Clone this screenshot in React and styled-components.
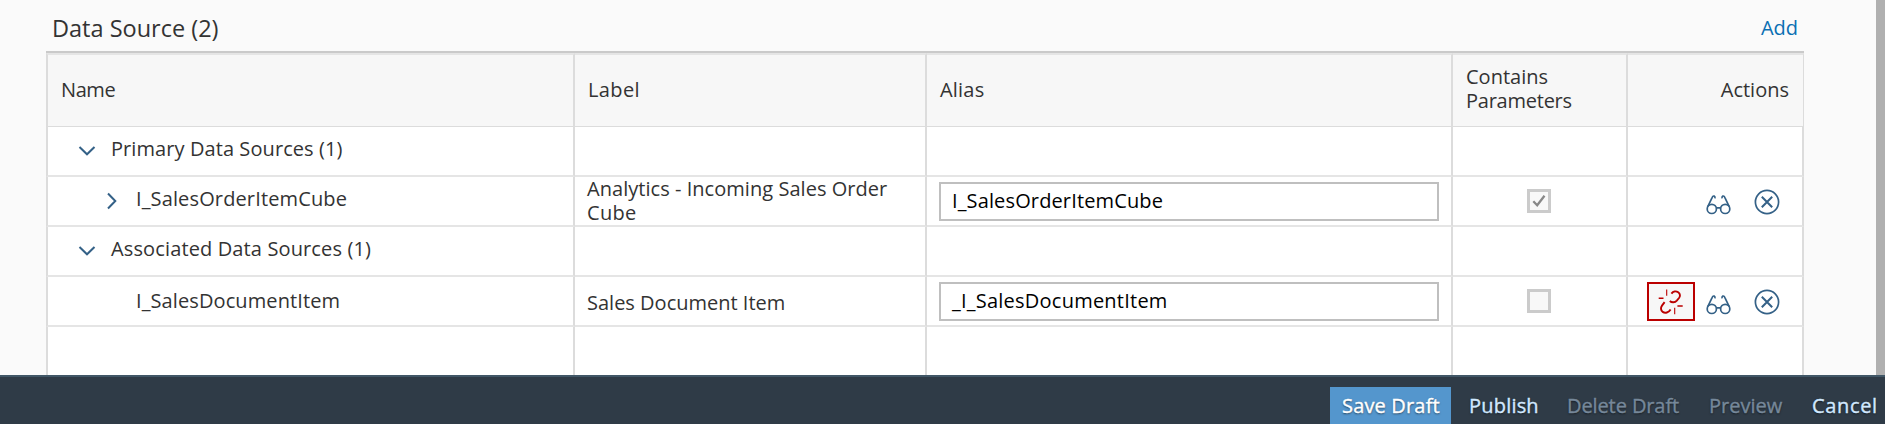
import React from 'react';
import styled, { createGlobalStyle } from 'styled-components';

const GlobalStyle = createGlobalStyle`
  * { box-sizing: border-box; }
  body {
    margin: 0;
    overflow: hidden;
    background: #fafafa;
    color: #333;
    font: 20px/24px "Open Sans", "Noto Sans", sans-serif;
  }
`;

const Page = styled.div`
  display: flex;
  flex-direction: column;
  height: 424px;
`;

const Scroller = styled.main`
  flex: none;
  height: 375px;
  overflow: hidden;
  padding-left: 46px;
  border-right: 9px solid #b0b0b0;
`;

const Panel = styled.section`
  width: 1758px;
`;

const Toolbar = styled.header`
  display: flex;
  justify-content: space-between;
  height: 51px;
  padding: 16px 6px 0 6px;
`;

const Title = styled.h2`
  margin: 0;
  font-size: 23.5px;
  font-weight: 400;
  line-height: 24px;
`;

const AddLink = styled.a`
  color: #0a6fb3;
  text-decoration: none;
`;

const Row = styled.div`
  display: grid;
  grid-template-columns: 529px 352px 526px 175px 176px;
  height: 50px;
`;

const HeadRow = styled(Row)`
  height: 76px;
  border-top: 2px solid #cacaca;
`;

const HeadCell = styled.div`
  display: flex;
  align-items: center;
  justify-content: ${(p) => (p.$end ? 'flex-end' : 'flex-start')};
  padding: 0 ${(p) => (p.$end ? 14 : 10)}px ${(p) => (p.$double ? 3 : 1)}px 13px;
  background: #f7f7f7;
  border-top: 2px solid #e5e5e5;
  border-right: 2px solid #dcdcdc;
  border-bottom: 1px solid #dcdcdc;
  &:first-child { border-left: 2px solid #dcdcdc; }
  &:last-child { border-right-width: 1px; }
`;

const Cell = styled.div`
  display: flex;
  align-items: flex-start;
  padding: ${(p) => p.$top || 0}px ${(p) => p.$right ?? 12}px 0 ${(p) => p.$left ?? 12}px;
  background: #fff;
  border-right: 2px solid #dcdcdc;
  border-bottom: 2px solid #e5e5e5;
  &:first-child { border-left: 2px solid #dcdcdc; }
`;

const Text = styled.span`
  letter-spacing: ${(p) => p.$track || 0}px;
  white-space: nowrap;
`;

const Stack = styled.div`
  display: flex;
  flex-direction: column;
`;

const Toggle = styled.span`
  display: flex;
  justify-content: center;
  width: 20px;
  padding-top: ${(p) => (p.$open ? 8 : 5)}px;
  margin-right: 14px;
`;

const AliasField = styled.div`
  flex: none;
  width: 500px;
  height: 39px;
  padding: 5px 11px;
  border: 2px solid #bfbfbf;
  background: #fff;
  color: #000;
`;

const CheckBox = styled.span`
  display: flex;
  align-items: center;
  justify-content: center;
  width: 24px;
  height: 24px;
  margin-left: 74px;
  border: 3px solid #cbcbcb;
  background: #f8f8f8;
`;

const Actions = styled.div`
  display: flex;
  align-items: center;
  margin-left: auto;
`;

const ActionButton = styled.span`
  display: flex;
  align-items: center;
  justify-content: center;
  width: 48px;
  height: 39px;
  border: 2px solid ${(p) => (p.$negative ? '#bb0000' : 'transparent')};
  background: ${(p) => (p.$negative ? '#f7f7f7' : 'transparent')};
`;

const Footer = styled.footer`
  display: flex;
  justify-content: flex-end;
  height: 49px;
  padding: 10px 9px 0 0;
  border-top: 2px solid #415767;
  background: #2f3b47;
`;

const FooterButton = styled.span`
  flex: none;
  width: ${(p) => p.$width}px;
  padding: ${(p) => '7px 0 0 ' + p.$left + 'px'};
  background: ${(p) => (p.$emphasized ? '#5496cd' : 'transparent')};
  color: ${(p) => (p.$disabled ? '#76889a' : p.$emphasized ? '#fff' : '#d1e8ff')};
  text-shadow: 0 1px 2px rgba(0, 0, 0, 0.6);
  -webkit-text-stroke: 0.4px currentColor;
`;

const ChevronDown = () => (
  <svg width="18" height="12" viewBox="0 0 18 12" fill="none" stroke="#346187" strokeWidth="2">
    <path d="M1.5 2 9 9.3 16.5 2" />
  </svg>
);

const ChevronRight = () => (
  <svg width="12" height="18" viewBox="0 0 12 18" fill="none" stroke="#346187" strokeWidth="2">
    <path d="M2 1.5 9.3 9 2 16.5" />
  </svg>
);

const Check = () => (
  <svg width="16" height="16" viewBox="0 0 16 16" fill="none" stroke="#888" strokeWidth="2.3">
    <path d="M2.3 8.2 6.2 12.2 13.5 2.8" />
  </svg>
);

const Glasses = () => (
  <svg width="26" height="26" viewBox="0 0 26 26" fill="none" stroke="#346187" strokeWidth="1.7">
    <circle cx="5.8" cy="19.9" r="4.6" />
    <circle cx="19.2" cy="19.9" r="4.6" />
    <path d="M10.2 18.8h4.6M1.9 17.4 6.1 8.6Q6.9 6.6 8.2 7.1 9.2 7.6 9 9.4M23.1 17.4 18.9 8.6Q18.1 6.6 16.8 7.1 15.8 7.6 16 9.4" />
  </svg>
);

const Decline = () => (
  <svg width="26" height="26" viewBox="0 0 26 26" fill="none" stroke="#346187">
    <circle cx="13" cy="13" r="11.6" strokeWidth="1.7" />
    <path d="M7.8 7.8 18.2 18.2M18.2 7.8 7.8 18.2" strokeWidth="2" />
  </svg>
);

const BrokenLink = () => (
  <svg width="26" height="26" viewBox="0 0 26 26" fill="none" stroke="#bb0000">
    <path d="M13.4 4.6C15.2 2.2 18 1.7 20.2 3.3 22.4 4.9 22.4 7.2 21 9L18.8 11.6C17 13.6 13.9 13.9 11.8 12" strokeWidth="1.9" />
    <path d="M6.6 13.2 4 16.6C2.5 18.6 2.6 21.4 4.7 22.9 7.2 24.6 10.6 23.6 12.6 20.4" strokeWidth="1.9" />
    <path d="M8.7 .5v6.3M16.7 18.8v6.5" strokeWidth="1.1" />
    <path d="M.7 9.2h4.8M19.4 16.9h5.3" strokeWidth="1.5" />
  </svg>
);

const GroupRow = ({ label, track }) => (
  <Row>
    <Cell $top={10} $left={29}>
      <Toggle $open><ChevronDown /></Toggle>
      <Text $track={track}>{label}</Text>
    </Cell>
    <Cell /><Cell /><Cell /><Cell />
  </Row>
);

export default function App() {
  return (
    <>
      <GlobalStyle />
      <Page>
        <Scroller>
          <Panel>
            <Toolbar>
              <Title>Data Source (2)</Title>
              <AddLink href="#"><Text>Add</Text></AddLink>
            </Toolbar>
            <HeadRow>
              <HeadCell><Text $track={-0.4}>Name</Text></HeadCell>
              <HeadCell><Text $track={0.4}>Label</Text></HeadCell>
              <HeadCell><Text $track={0.2}>Alias</Text></HeadCell>
              <HeadCell $double>
                <Stack>
                  <Text>Contains</Text>
                  <Text $track={-0.24}>Parameters</Text>
                </Stack>
              </HeadCell>
              <HeadCell $end><Text>Actions</Text></HeadCell>
            </HeadRow>

            <GroupRow label="Primary Data Sources (1)" track={0.08} />

            <Row>
              <Cell $top={10} $left={54}>
                <Toggle><ChevronRight /></Toggle>
                <Text $track={0.13}>I_SalesOrderItemCube</Text>
              </Cell>
              <Cell>
                <Stack>
                  <Text $track={0.04}>Analytics - Incoming Sales Order</Text>
                  <Text $track={0.3}>Cube</Text>
                </Stack>
              </Cell>
              <Cell $top={5}><AliasField><Text $track={0.13}>I_SalesOrderItemCube</Text></AliasField></Cell>
              <Cell $top={12} $left={0}><CheckBox><Check /></CheckBox></Cell>
              <Cell $top={5} $right={11}>
                <Actions>
                  <ActionButton><Glasses /></ActionButton>
                  <ActionButton><Decline /></ActionButton>
                </Actions>
              </Cell>
            </Row>

            <GroupRow label="Associated Data Sources (1)" track={0.13} />

            <Row>
              <Cell $top={12} $left={88}><Text $track={0.1}>I_SalesDocumentItem</Text></Cell>
              <Cell $top={14}><Text>Sales Document Item</Text></Cell>
              <Cell $top={5}><AliasField><Text $track={0.23}>_I_SalesDocumentItem</Text></AliasField></Cell>
              <Cell $top={12} $left={0}><CheckBox /></Cell>
              <Cell $top={5} $right={11}>
                <Actions>
                  <ActionButton $negative><BrokenLink /></ActionButton>
                  <ActionButton><Glasses /></ActionButton>
                  <ActionButton><Decline /></ActionButton>
                </Actions>
              </Cell>
            </Row>

            <Row><Cell /><Cell /><Cell /><Cell /><Cell /></Row>
          </Panel>
        </Scroller>
        <Footer>
          <FooterButton $width={121} $left={12} $emphasized><Text $track={0.17}>Save Draft</Text></FooterButton>
          <FooterButton $width={98} $left={18}><Text $track={0.2}>Publish</Text></FooterButton>
          <FooterButton $width={130} $left={18} $disabled><Text $track={-0.1}>Delete Draft</Text></FooterButton>
          <FooterButton $width={114} $left={30} $disabled><Text>Preview</Text></FooterButton>
          <FooterButton $width={83} $left={19}><Text $track={0.65}>Cancel</Text></FooterButton>
        </Footer>
      </Page>
    </>
  );
}
